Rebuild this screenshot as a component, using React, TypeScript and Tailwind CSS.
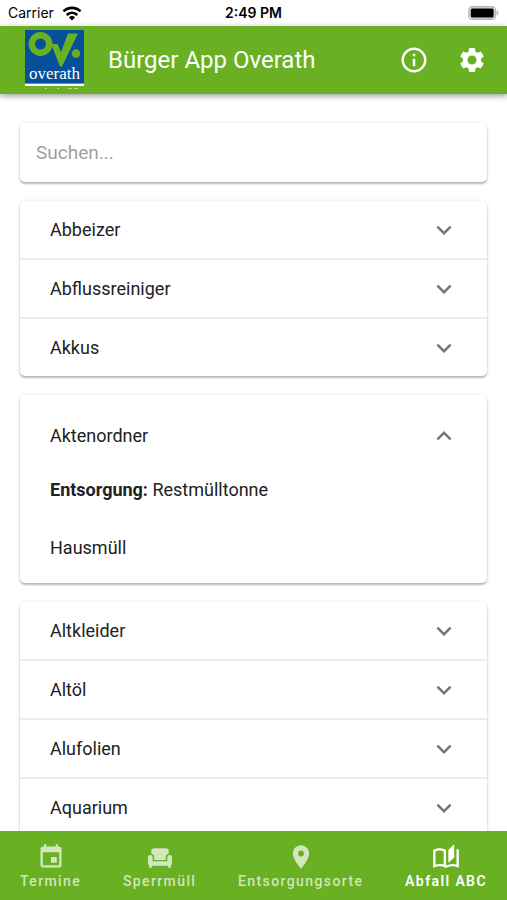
import { useState } from "react";
import { MdEvent, MdInfoOutline, MdPlace, MdSettings } from "react-icons/md";
import clsx from "clsx";

type Item = {
  title: string;
  disposal?: string;
  category?: string;
};

const items: Item[] = [
  { title: "Abbeizer" },
  { title: "Abflussreiniger" },
  { title: "Akkus" },
  { title: "Aktenordner", disposal: "Restmülltonne", category: "Hausmüll" },
  { title: "Altkleider" },
  { title: "Altöl" },
  { title: "Alufolien" },
  { title: "Aquarium" },
];

const tabs = [
  { label: "Termine", icon: <MdEvent className="size-7" /> },
  { label: "Sperrmüll", icon: <SofaIcon /> },
  { label: "Entsorgungsorte", icon: <MdPlace className="size-7" /> },
  { label: "Abfall ABC", icon: <BookIcon /> },
];

// The open panel stands alone, its closed neighbours share one card
function groupItems(list: Item[], open: string | null) {
  const groups: Item[][] = [];

  list.forEach((item, i) => {
    const previous = list[i - 1];

    if (!previous || item.title === open || previous.title === open) {
      groups.push([item]);
    } else {
      groups[groups.length - 1].push(item);
    }
  });

  return groups;
}

export default function App() {
  const [search, setSearch] = useState("");
  const [open, setOpen] = useState<string | null>("Aktenordner");
  const [tab, setTab] = useState("Abfall ABC");

  const filtered = items.filter((item) =>
    item.title.toLowerCase().includes(search.toLowerCase())
  );

  return (
    <div className="flex h-screen flex-col overflow-hidden bg-white font-[Roboto,sans-serif] text-[#212121]">
      <StatusBar />
      <header className="z-10 flex h-[68px] shrink-0 items-center bg-[#69b023] pr-5 pl-6 text-white shadow-[0_2px_6px_rgba(0,0,0,0.4)]">
        <Logo />
        <h1 className="ml-6 flex-1 text-2xl">Bürger App Overath</h1>
        <button type="button" aria-label="Info">
          <MdInfoOutline className="size-[30px]" />
        </button>
        <button type="button" aria-label="Einstellungen" className="ml-7">
          <MdSettings className="size-[30px]" />
        </button>
      </header>
      <main className="min-h-0 flex-1 overflow-hidden px-5 pt-[29px]">
        <input
          type="text"
          aria-label="Suchen"
          placeholder="Suchen..."
          value={search}
          onChange={(e) => setSearch(e.target.value)}
          className="block h-[59px] w-full rounded-[5px] px-4 text-[19px] shadow-[0_2px_2px_rgba(0,0,0,0.25),0_0_4px_rgba(0,0,0,0.1)] outline-none placeholder:text-[#a0a0a0]"
        />
        <div className="mt-[19px] flex flex-col gap-[19px]">
          {groupItems(filtered, open).map((group) => (
            <div
              key={group[0].title}
              className="divide-y-2 divide-[#ececec] rounded-[5px] bg-white shadow-[0_2px_2px_rgba(0,0,0,0.25),0_0_4px_rgba(0,0,0,0.1)]"
            >
              {group.map((item) => (
                <Panel
                  key={item.title}
                  item={item}
                  open={open === item.title}
                  onToggle={() =>
                    setOpen(open === item.title ? null : item.title)
                  }
                />
              ))}
            </div>
          ))}
        </div>
      </main>
      <nav className="z-10 flex h-[69px] shrink-0 justify-between bg-[#69b023] px-5 text-white">
        {tabs.map(({ label, icon }) => (
          <button
            key={label}
            type="button"
            onClick={() => setTab(label)}
            className={clsx(
              "flex flex-col items-center pt-3 text-sm leading-5 tracking-widest",
              tab === label ? "font-semibold" : "font-medium text-white/70"
            )}
          >
            {icon}
            {label}
          </button>
        ))}
      </nav>
    </div>
  );
}

function StatusBar() {
  return (
    <div className="grid h-[26px] shrink-0 grid-cols-3 items-center px-2 font-[Inter,sans-serif] text-sm text-black">
      <div className="flex items-center gap-2">
        Carrier
        <svg viewBox="0 0 20 15" className="h-[15px] w-5">
          <g fill="none" stroke="currentColor" strokeWidth="2.6">
            <path d="M1.5 5.4a12 12 0 0 1 17 0" />
            <path d="M4.7 9a7.5 7.5 0 0 1 10.6 0" />
          </g>
          <path d="M10 14.5 6.9 11.3a4.4 4.4 0 0 1 6.2 0z" fill="currentColor" />
        </svg>
      </div>
      <div className="text-center font-semibold">2:49 PM</div>
      <svg viewBox="0 0 31 14" className="h-[14px] w-[31px] justify-self-end">
        <rect x="1" y="0.8" width="26.4" height="12.4" rx="3.5" fill="#ddd" stroke="#b5b5b5" strokeWidth="1.4" />
        <rect x="2.8" y="2.5" width="22.8" height="9" rx="1.5" />
        <path d="M28.6 4.6c2.4 1 2.4 3.8 0 4.8z" fill="#aaa" />
      </svg>
    </div>
  );
}

function Logo() {
  return (
    <svg viewBox="0 0 60 60" className="h-[60px] w-[60px]" role="img" aria-label="overath">
      <rect x="1" width="59" height="53" fill="#064f9b" />
      <circle cx="16.5" cy="14" r="8.7" fill="none" stroke="#69b023" strokeWidth="6.4" />
      <path d="M22 17.5h6.500l7.500 19h2L54 3.500H44L37 22l-3.500-8H24z" fill="#69b023" />
      <circle cx="52" cy="23.500" r="4.200" fill="#69b023" />
      <text x="30.5" y="49" textAnchor="middle" fontSize="17" fill="#fff" className="font-[Liberation_Serif,serif]">
        overath
      </text>
      <rect x="1" y="54" width="59" height="2" fill="#fff" />
      <path d="M21 58.500h2M33 58.500h2M44 58.500h4M50 58.500h4" stroke="#b7d88f" strokeWidth="1" />
    </svg>
  );
}

function Panel({
  item,
  open,
  onToggle,
}: {
  item: Item;
  open: boolean;
  onToggle: () => void;
}) {
  return (
    <section>
      <button
        type="button"
        aria-expanded={open}
        onClick={onToggle}
        className={clsx(
          "flex w-full items-center justify-between pr-7 pl-[30px] text-left text-lg",
          open ? "h-[81px]" : "h-[57px]"
        )}
      >
        {item.title}
        <Chevron up={open} />
      </button>
      {open && (
        <div className="px-[30px] pb-[21px] text-lg leading-7">
          <p>
            <b>Entsorgung:</b> {item.disposal}
          </p>
          <p className="mt-[30px]">{item.category}</p>
        </div>
      )}
    </section>
  );
}

function Chevron({ up }: { up: boolean }) {
  return (
    <svg viewBox="0 0 24 24" className="size-[30px]">
      <path
        d={
          up
            ? "M7.41 15.41 12 10.83l4.59 4.58L18 14l-6-6-6 6z"
            : "M7.41 8.59 12 13.17l4.59-4.58L18 10l-6 6-6-6z"
        }
        fill="#757575"
      />
    </svg>
  );
}

function SofaIcon() {
  return (
    <svg viewBox="0 0 24 24" className="size-7" fill="currentColor">
      <path d="M7 4.500h10A2.500 2.500 0 0 1 19.500 7v2.200a3 3 0 0 0-2.500 2.900v2.400H7v-2.400a3 3 0 0 0-2.500-2.900V7A2.500 2.500 0 0 1 7 4.500z" />
      <path d="M3.700 10.200a2 2 0 0 1 2 2v3.500h12.600v-3.500a2 2 0 1 1 4 0v5.300a2 2 0 0 1-1.100 1.700v2h-2.500V19.600H5.300v1.600H2.800v-2a2 2 0 0 1-1.100-1.700v-5.300a2 2 0 0 1 2-2z" />
    </svg>
  );
}

function BookIcon() {
  return (
    <svg viewBox="0 0 24 24" className="size-7" fill="currentColor">
      <path d="M19 1l-5 5v11l5-4.500V1m2 4v13.500c-1.100-.35-2.300-.5-3.500-.5-1.700 0-4.150.65-5.500 1.500V6c-1.450-1.100-3.550-1.500-5.500-1.500S2.450 4.900 1 6v14.650c0 .25.25.5.5.5.1 0 .15-.05.25-.05C3.100 20.450 5.050 20 6.500 20c1.950 0 4.050.4 5.500 1.500 1.350-.85 3.800-1.500 5.500-1.500 1.650 0 3.350.3 4.750 1.050.1.050.15.050.25.050.25 0 .5-.25.5-.5V6c-.6-.45-1.250-.75-2-1M10 18.410C8.750 18.090 7.500 18 6.500 18c-1.060 0-2.320.19-3.500.5V7.130c.91-.4 2.140-.63 3.500-.63s2.590.23 3.500.63v11.280z" />
    </svg>
  );
}
